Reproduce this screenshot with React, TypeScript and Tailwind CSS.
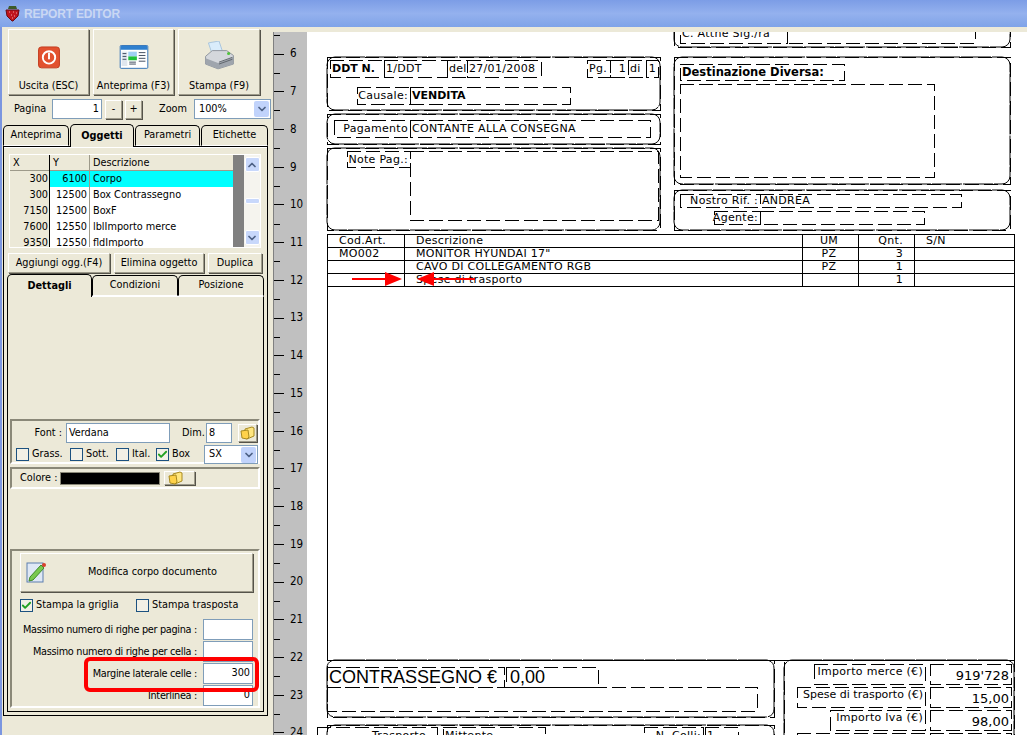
import type { ReactNode } from 'react'
import { ChevronDown, ChevronUp, Check } from 'lucide-react'

const rulerMarks = [6, 7, 8, 9, 10, 11, 12, 13, 14, 15, 16, 17, 18, 19, 20, 21, 22, 23, 24]

const gridRows = [
  { x: '300', y: '6100', name: 'Corpo', selected: true },
  { x: '300', y: '12500', name: 'Box Contrassegno' },
  { x: '7150', y: '12500', name: 'BoxF' },
  { x: '7600', y: '12550', name: 'lblImporto merce' },
  { x: '9350', y: '12550', name: 'fldImporto' },
]

const tableRows = [
  ['Cod.Art.', 'Descrizione', 'UM', 'Qnt.', 'S/N'],
  ['MO002', 'MONITOR HYUNDAI 17"', 'PZ', '3', ''],
  ['', 'CAVO DI COLLEGAMENTO RGB', 'PZ', '1', ''],
  ['', 'Spese di trasporto', '', '1', ''],
]

const xpBtn =
  'flex items-center justify-center bg-[#ece9d8] border border-t-white border-l-white border-r-[#9d9a8a] border-b-[#9d9a8a] shadow-[1px_1px_0_#55534a]'
const xpInput = 'flex items-center bg-white border border-[#7f9db9]'

function Folder() {
  return (
    <svg width="15" height="14" viewBox="0 0 15 14">
      <path d="M5 3 L12 1 L14 2 L14 10 L7 13 L5 12 Z" fill="#ffe680" stroke="#a88a20" />
      <path d="M1 5 L8 4 L9 11 L7 13 L2 12 Z" fill="#ffd24a" stroke="#a88a20" />
    </svg>
  )
}

function CheckBox({ checked }: { checked?: boolean }) {
  return (
    <span className="flex w-[13px] h-[13px] shrink-0 items-center justify-center bg-[#f2f0e6] border border-[#1c5180]">
      {checked && <Check size={11} strokeWidth={4} className="text-[#21a121]" />}
    </span>
  )
}

function Combo({ value, className }: { value: string; className: string }) {
  return (
    <div className={`${xpInput} ${className} justify-between pl-[4px] pr-[1px]`}>
      <span>{value}</span>
      <span className="flex w-[15px] h-[16px] items-center justify-center rounded-[2px] bg-[#c1d3fb]">
        <ChevronDown size={12} strokeWidth={3.5} className="text-[#4d6185]" />
      </span>
    </div>
  )
}

function Tab({ label, active, className }: { label: string; active?: boolean; className: string }) {
  return (
    <div
      className={`flex items-center justify-center border border-black rounded-t-[5px] bg-[#ece9d8] ${className} ${
        active ? 'font-bold -mt-[1px] border-b-0 relative z-10' : 'border-b-white'
      }`}
    >
      {label}
    </div>
  )
}

function Group({ className, children }: { className: string; children: ReactNode }) {
  return (
    <div className={`ml-[2px] w-[250px] border-2 border-t-[#8a8878] border-l-[#8a8878] border-r-white border-b-white ${className}`}>
      {children}
    </div>
  )
}

function Sidebar() {
  return (
    <div className="w-[273px] shrink-0 border-l-2 border-[#7b96e0] bg-[#ece9d8] pt-[2px] whitespace-nowrap">
      <div className="flex ml-[6px] gap-[4px]">
        <button className={`${xpBtn} w-[81px] h-[66px] flex-col`}>
          <svg width="24" height="24" viewBox="0 0 24 24" className="mt-[16px]">
            <rect x="1" y="1" width="22" height="22" rx="3" fill="#e2512f" stroke="#c23a1c" />
            <circle cx="12" cy="12" r="6.5" fill="none" stroke="#fff" strokeWidth="2" />
            <rect x="11" y="7" width="2" height="7" fill="#fff" />
          </svg>
          <span className="mt-[9px]">Uscita (ESC)</span>
        </button>
        <button className={`${xpBtn} w-[81px] h-[66px] flex-col`}>
          <svg width="30" height="25" viewBox="0 0 30 25" className="mt-[15px]">
            <rect x="0.5" y="0.5" width="29" height="24" rx="1" fill="#fff" stroke="#2c6fb5" />
            <rect x="1" y="1" width="28" height="4" fill="#2f80cf" />
            <rect x="2" y="7" width="6" height="15" fill="#dfe6ee" />
            <rect x="9" y="7" width="9" height="5" fill="#9fd0f4" />
            <rect x="9" y="12" width="9" height="4" fill="#1fc03a" />
            <path d="M3 9h4M3 12h4M3 15h4M20 8h7M20 11h7M20 14h7M20 17h7M10 18h7M10 20h7" stroke="#3d4a5c" />
          </svg>
          <span className="mt-[9px]">Anteprima (F3)</span>
        </button>
        <button className={`${xpBtn} w-[82px] h-[66px] flex-col`}>
          <svg width="32" height="30" viewBox="0 0 32 30" className="mt-[11px]">
            <path d="M5 2 L16 0 L20 12 L9 14 Z" fill="#d9ecfb" stroke="#a8c4dc" />
            <path d="M2 16 L9 10 L24 10 L31 15 L31 24 L15 29 L2 24 Z" fill="#d4d7dc" stroke="#8e949c" />
            <path d="M2 18 L15 23 L31 17 L31 24 L15 29 L2 24 Z" fill="#9fa5ad" />
            <path d="M16 22 L30 17 M16 24 L30 19" stroke="#5e646c" />
            <circle cx="26" cy="13" r="1.6" fill="#4ec23a" />
          </svg>
          <span className="mt-[8px]">Stampa (F9)</span>
        </button>
      </div>

      <div className="flex items-center h-[20px] mt-[4px]">
        <span className="ml-[12px] w-[36px]">Pagina</span>
        <div className={`${xpInput} ml-[2px] w-[50px] h-[20px] justify-end pr-[2px]`}>1</div>
        <button className={`${xpBtn} ml-[3px] w-[17px] h-[19px]`}>-</button>
        <button className={`${xpBtn} ml-[3px] w-[17px] h-[19px]`}>+</button>
        <span className="ml-[17px] w-[33px]">Zoom</span>
        <Combo value="100%" className="ml-[2px] w-[77px] h-[20px]" />
      </div>

      <div className="flex ml-[1px] mt-[6px] h-[21px] gap-px">
        <Tab label="Anteprima" className="w-[66px]" />
        <Tab label="Oggetti" active className="w-[64px] h-[23px]" />
        <Tab label="Parametri" className="w-[65px]" />
        <Tab label="Etichette" className="w-[67px]" />
      </div>

      <div className="ml-[1px] w-[265px] h-[570px] border border-black px-[3px] pt-[7px] shadow-[inset_0_1px_0_#fff]">
        <div className="flex h-[94px] ml-[2px] w-[252px] border border-white overflow-hidden">
          <div className="w-[223px] shrink-0">
            <div className="grid grid-cols-[40px_40px_1fr] h-[16px] bg-[#ece9d8] border-b border-[#9d9a8a]">
              <span className="border-r border-black pl-[3px]">X</span>
              <span className="border-r border-[#9d9a8a] pl-[3px]">Y</span>
              <span className="pl-[3px]">Descrizione</span>
            </div>
            {gridRows.map((row) => (
              <div key={row.name} className="grid grid-cols-[40px_40px_1fr] h-[16px] border-b border-[#d0cdbd]">
                <span className="border-r border-black bg-[#ece9d8] text-right pr-[1px]">{row.x}</span>
                <span className={`border-r border-[#9d9a8a] text-right pr-[2px] ${row.selected ? 'bg-[#00ffff]' : 'bg-white'}`}>
                  {row.y}
                </span>
                <span className={`pl-[3px] ${row.selected ? 'bg-[#00ffff]' : 'bg-white'}`}>{row.name}</span>
              </div>
            ))}
          </div>
          <div className="w-[11px] shrink-0 bg-[#808080]" />
          <div className="flex flex-1 flex-col items-center justify-between bg-[#f5f4ee] py-[2px]">
            <span className="flex w-[15px] h-[15px] items-center justify-center rounded-[2px] bg-[#c8d8fb] border border-white">
              <ChevronUp size={12} strokeWidth={3.5} className="text-[#4d6185]" />
            </span>
            <span className="w-[15px] h-[6px] rounded-[2px] bg-[#c8d8fb] border border-white" />
            <span className="flex w-[15px] h-[15px] items-center justify-center rounded-[2px] bg-[#c8d8fb] border border-white">
              <ChevronDown size={12} strokeWidth={3.5} className="text-[#4d6185]" />
            </span>
          </div>
        </div>

        <div className="flex ml-[1px] mt-[5px] gap-[4px]">
          <button className={`${xpBtn} w-[102px] h-[20px]`}>Aggiungi ogg.(F4)</button>
          <button className={`${xpBtn} w-[90px] h-[20px]`}>Elimina oggetto</button>
          <button className={`${xpBtn} w-[54px] h-[20px]`}>Duplica</button>
        </div>

        <div className="flex mt-[2px] h-[21px]">
          <Tab label="Dettagli" active className="w-[85px] h-[23px]" />
          <Tab label="Condizioni" className="w-[86px]" />
          <Tab label="Posizione" className="w-[86px]" />
        </div>

        <div className="w-[257px] h-[416px] border border-black border-t-white pt-[122px]">
          <Group className="h-[45px] pl-[4px] pt-[2px]">
            <div className="flex items-center h-[20px]">
              <span className="w-[46px] text-right">Font :</span>
              <div className={`${xpInput} ml-[4px] w-[104px] h-[20px] pl-[2px]`}>Verdana</div>
              <span className="ml-[12px] w-[21px]">Dim.</span>
              <div className={`${xpInput} ml-[3px] w-[26px] h-[20px] pl-[2px]`}>8</div>
              <button className={`${xpBtn} ml-[6px] w-[19px] h-[18px]`}>
                <Folder />
              </button>
            </div>
            <div className="flex items-center h-[19px] mt-[2px]">
              <CheckBox />
              <span className="ml-[3px] w-[38px]">Grass.</span>
              <CheckBox />
              <span className="ml-[3px] w-[30px]">Sott.</span>
              <CheckBox />
              <span className="ml-[3px] w-[24px]">Ital.</span>
              <CheckBox checked />
              <span className="ml-[3px] w-[32px]">Box</span>
              <Combo value="SX" className="w-[54px] h-[19px]" />
            </div>
          </Group>
          <Group className="h-[22px] mt-[3px] flex items-center pl-[8px]">
            <span className="w-[38px]">Colore :</span>
            <div className="w-[100px] h-[13px] ml-[2px] bg-black border border-[#8a8878]" />
            <button className={`${xpBtn} ml-[4px] w-[31px] h-[14px] justify-start pl-[3px]`}>
              <Folder />
            </button>
          </Group>
          <Group className="h-[159px] mt-[60px] pl-[8px] pt-[2px]">
            <button className={`${xpBtn} w-[233px] h-[39px] relative`}>
              <svg width="21" height="22" viewBox="0 0 21 22" className="absolute left-[5px] top-[7px]">
                <rect x="1" y="2" width="16" height="19" fill="#dfe8f5" stroke="#5d7fae" />
                <path d="M4 16 L15 4 L18 7 L7 19 L3 20 Z" fill="#79c94f" stroke="#3f8a2a" />
                <circle cx="18" cy="4" r="2" fill="#d8402a" />
              </svg>
              <span className="ml-[32px]">Modifica corpo documento</span>
            </button>
            <div className="flex items-center h-[14px] mt-[6px]">
              <CheckBox checked />
              <span className="ml-[3px] w-[100px]">Stampa la griglia</span>
              <CheckBox />
              <span className="ml-[3px]">Stampa trasposta</span>
            </div>
            {[
              ['Massimo numero di righe per pagina :', ''],
              ['Massimo numero di righe per cella :', ''],
              ['Margine laterale celle :', '300'],
              ['Interlinea :', '0'],
            ].map(([label, value], i) => (
              <div key={label} className={`flex items-center justify-end w-[233px] h-[21px] ${i === 0 ? 'mt-[7px]' : 'mt-px'}`}>
                <span className="mr-[6px] pt-px tracking-[-0.3px]">{label}</span>
                <div className={`${xpInput} w-[50px] h-[21px] shrink-0 justify-end pr-[2px]`}>{value}</div>
              </div>
            ))}
          </Group>
        </div>
      </div>
    </div>
  )
}

function Ruler() {
  return (
    <div className="w-[34px] shrink-0 bg-[#c0c0c0] border-l border-[#808080] overflow-hidden text-[11.5px]">
      {rulerMarks.map((n) => (
        <div key={n} className="flex flex-col h-[37.72px]">
          <div className="w-[6px] h-px bg-black mt-[3px]" />
          <div className="flex items-center h-[14px] mt-[11px]">
            <div className="w-[10px] h-px bg-black" />
            <span className="ml-[6px]">{n}</span>
          </div>
        </div>
      ))}
    </div>
  )
}

// oggetti del report: posizionati liberamente sulla pagina
function Frame({ className }: { className: string }) {
  return (
    <div className={`absolute ${className}`}>
      <svg className="absolute inset-0 w-full h-full overflow-visible" shapeRendering="crispEdges">
        <rect width="100%" height="100%" fill="none" stroke="#000" strokeDasharray="14 5" />
        <rect width="100%" height="100%" rx="8" fill="none" stroke="#000" strokeDasharray="30 1" shapeRendering="auto" />
      </svg>
    </div>
  )
}

function Field({
  className,
  children,
  bold,
  right,
}: {
  className: string
  children?: ReactNode
  bold?: boolean
  right?: boolean
}) {
  return (
    <div
      className={`absolute flex items-center whitespace-nowrap px-[2px] ${right ? 'justify-end' : ''} ${
        bold ? 'font-bold tracking-normal' : ''
      } ${className}`}
    >
      <svg className="absolute inset-0 w-full h-full overflow-visible" shapeRendering="crispEdges">
        <rect width="100%" height="100%" fill="none" stroke="#000" strokeDasharray="14 5" />
      </svg>
      <span className="relative">{children}</span>
    </div>
  )
}

function Page() {
  return (
    <div className="relative flex-1 bg-white overflow-hidden text-[11px] leading-[13px] tracking-[0.3px] text-black font-['DejaVu_Sans',sans-serif]">
      <Frame className="left-[20px] top-[25px] w-[333px] h-[53px]" />
      <Frame className="left-[20px] top-[82px] w-[333px] h-[30px]" />
      <Frame className="left-[20px] top-[116px] w-[333px] h-[82px]" />
      <Frame className="left-[367px] -top-[15px] w-[336px] h-[30px]" />
      <Frame className="left-[367px] top-[25px] w-[336px] h-[127px]" />
      <Frame className="left-[367px] top-[158px] w-[336px] h-[40px]" />
      <Frame className="left-[20px] top-[628px] w-[447px] h-[57px]" />
      <Frame className="left-[20px] top-[693px] w-[447px] h-[60px]" />
      <Frame className="left-[477px] top-[628px] w-[230px] h-[120px]" />

      <Field bold className="left-[23px] top-[28px] w-[54px] h-[17px]">DDT N.</Field>
      <Field className="left-[77px] top-[28px] w-[63px] h-[17px]">1/DDT</Field>
      <Field className="left-[140px] top-[28px] w-[20px] h-[17px]">del</Field>
      <Field className="left-[160px] top-[28px] w-[74px] h-[17px]">27/01/2008</Field>
      <Field className="left-[280px] top-[28px] w-[23px] h-[17px]">Pg.</Field>
      <Field right className="left-[303px] top-[28px] w-[18px] h-[17px]">1</Field>
      <Field className="left-[321px] top-[28px] w-[18px] h-[17px]">di</Field>
      <Field right className="left-[339px] top-[28px] w-[12px] h-[17px]">1</Field>
      <Field right className="left-[50px] top-[55px] w-[53px] h-[17px]">Causale:</Field>
      <Field bold className="left-[103px] top-[55px] w-[160px] h-[17px]">VENDITA</Field>
      <Field right className="left-[27px] top-[88px] w-[76px] h-[17px]">Pagamento</Field>
      <Field className="left-[103px] top-[88px] w-[240px] h-[17px]">CONTANTE ALLA CONSEGNA</Field>
      <Field right className="left-[40px] top-[119px] w-[63px] h-[16px]">Note Pag.:</Field>
      <Field className="left-[103px] top-[119px] w-[248px] h-[69px]" />
      <Field className="left-[373px] -top-[9px] w-[107px] h-[20px]">C. Attne Sig./ra</Field>
      <Field className="left-[480px] -top-[9px] w-[188px] h-[20px]" />
      <Field bold className="left-[373px] top-[32px] w-[164px] h-[16px] text-[11.5px]">Destinazione Diversa:</Field>
      <Field className="left-[373px] top-[52px] w-[254px] h-[93px]" />
      <Field right className="left-[373px] top-[162px] w-[80px] h-[13px]">Nostro Rif. :</Field>
      <Field className="left-[453px] top-[162px] w-[201px] h-[13px]">ANDREA</Field>
      <Field right className="left-[407px] top-[179px] w-[46px] h-[13px]">Agente:</Field>
      <Field className="left-[453px] top-[179px] w-[164px] h-[13px]" />

      <div className="absolute left-[20px] top-[202px] w-[688px] h-[427px] border border-black">
        {tableRows.map((row, i) => (
          <div key={i} className="grid grid-cols-[77px_398px_56px_56px_1fr] h-[13px] border-b border-black leading-[12px]">
            <span className="border-r border-black pl-[11px]">{row[0]}</span>
            <span className="border-r border-black pl-[11px]">{row[1]}</span>
            <span className="border-r border-black text-center pr-[3px]">{row[2]}</span>
            <span className="border-r border-black text-right pr-[11px]">{row[3]}</span>
            <span className="pl-[11px]">{row[4]}</span>
          </div>
        ))}
      </div>

      <Field className="left-[20px] top-[635px] w-[177px] h-[20px] text-[18px] tracking-normal font-['Liberation_Sans',sans-serif]">CONTRASSEGNO €</Field>
      <Field className="left-[199px] top-[635px] w-[92px] h-[20px] pl-[4px] text-[18px] tracking-normal font-['Liberation_Sans',sans-serif]">0,00</Field>
      <Field className="left-[20px] top-[655px] w-[430px] h-[24px]" />
      <Field right className="left-[10px] top-[695px] w-[120px] h-[20px] pb-[4px]"><span className="mr-[9px]">Trasporto</span></Field>
      <Field className="left-[136px] top-[695px] w-[102px] h-[20px] pb-[4px]">Mittente</Field>
      <Field right className="left-[337px] top-[695px] w-[59px] h-[20px] pb-[4px]">N. Colli:</Field>
      <Field className="left-[398px] top-[695px] w-[33px] h-[20px] pb-[4px]">1</Field>

      <Field right className="left-[507px] top-[632px] w-[111px] h-[20px] pb-[6px]">Importo merce (€)</Field>
      <Field right className="left-[623px] top-[632px] w-[81px] h-[20px] pt-[3px] text-[13px] tracking-normal">919'728</Field>
      <Field right className="left-[490px] top-[655px] w-[128px] h-[20px] pb-[6px] tracking-normal">Spese di trasporto (€)</Field>
      <Field right className="left-[623px] top-[655px] w-[81px] h-[20px] pt-[3px] text-[13px] tracking-normal">15,00</Field>
      <Field right className="left-[523px] top-[678px] w-[95px] h-[20px] pb-[6px]">Importo Iva (€)</Field>
      <Field right className="left-[623px] top-[678px] w-[81px] h-[20px] pt-[3px] text-[13px] tracking-normal">98,00</Field>
      <Field className="left-[490px] top-[701px] w-[128px] h-[20px]" />
      <Field className="left-[623px] top-[701px] w-[81px] h-[20px]" />

      {/* frecce rosse */}
      <svg className="absolute left-[45px] top-[239px]" width="123" height="16" viewBox="0 0 123 16">
        <path d="M0 7h33v-6l17 7-17 7v-6H0z" fill="#ff0000" />
        <path d="M123 7H82V1L65 8l17 7V9h41z" fill="#ff0000" />
      </svg>
    </div>
  )
}

export default function App() {
  return (
    <div className="relative w-[1027px] h-[735px] flex flex-col overflow-hidden bg-[#ece9d8] text-[10.8px] text-black font-['DejaVu_Sans_Condensed','Noto_Sans',sans-serif]">
      <div className="flex items-center h-[27px] shrink-0 pl-[5px] bg-gradient-to-b from-[#7c9de6] via-[#94b1ee] to-[#7fa3e8]">
        <svg width="15" height="17" viewBox="0 0 15 17">
          <path d="M4 1h7l1 3H3z" fill="#3d5a2a" />
          <path d="M1 5 L14 5 L13 11 L8 16 L7 16 L2 11 Z" fill="#c0141c" stroke="#6b0a10" />
          <path d="M4 7h1M8 7h1M11 8h1M6 10h1M9 11h1M7 13h1" stroke="#f0a0a0" />
        </svg>
        <span className="ml-[4px] text-[12px] tracking-[-0.2px] font-bold text-[#c9d7f3] font-['Liberation_Sans',sans-serif]">REPORT EDITOR</span>
      </div>

      <div className="flex flex-1 min-h-0">
        <Sidebar />
        <div className="flex flex-1 flex-col min-w-0 pt-[5px]">
          <div className="flex flex-1 min-h-0">
            <Ruler />
            <Page />
          </div>
        </div>
      </div>

      {/* evidenziazione rossa sopra al campo */}
      <div className="absolute left-[84px] top-[657px] w-[175px] h-[35px] rounded-[6px] border-[4px] border-[#ff0000]" />
    </div>
  )
}
